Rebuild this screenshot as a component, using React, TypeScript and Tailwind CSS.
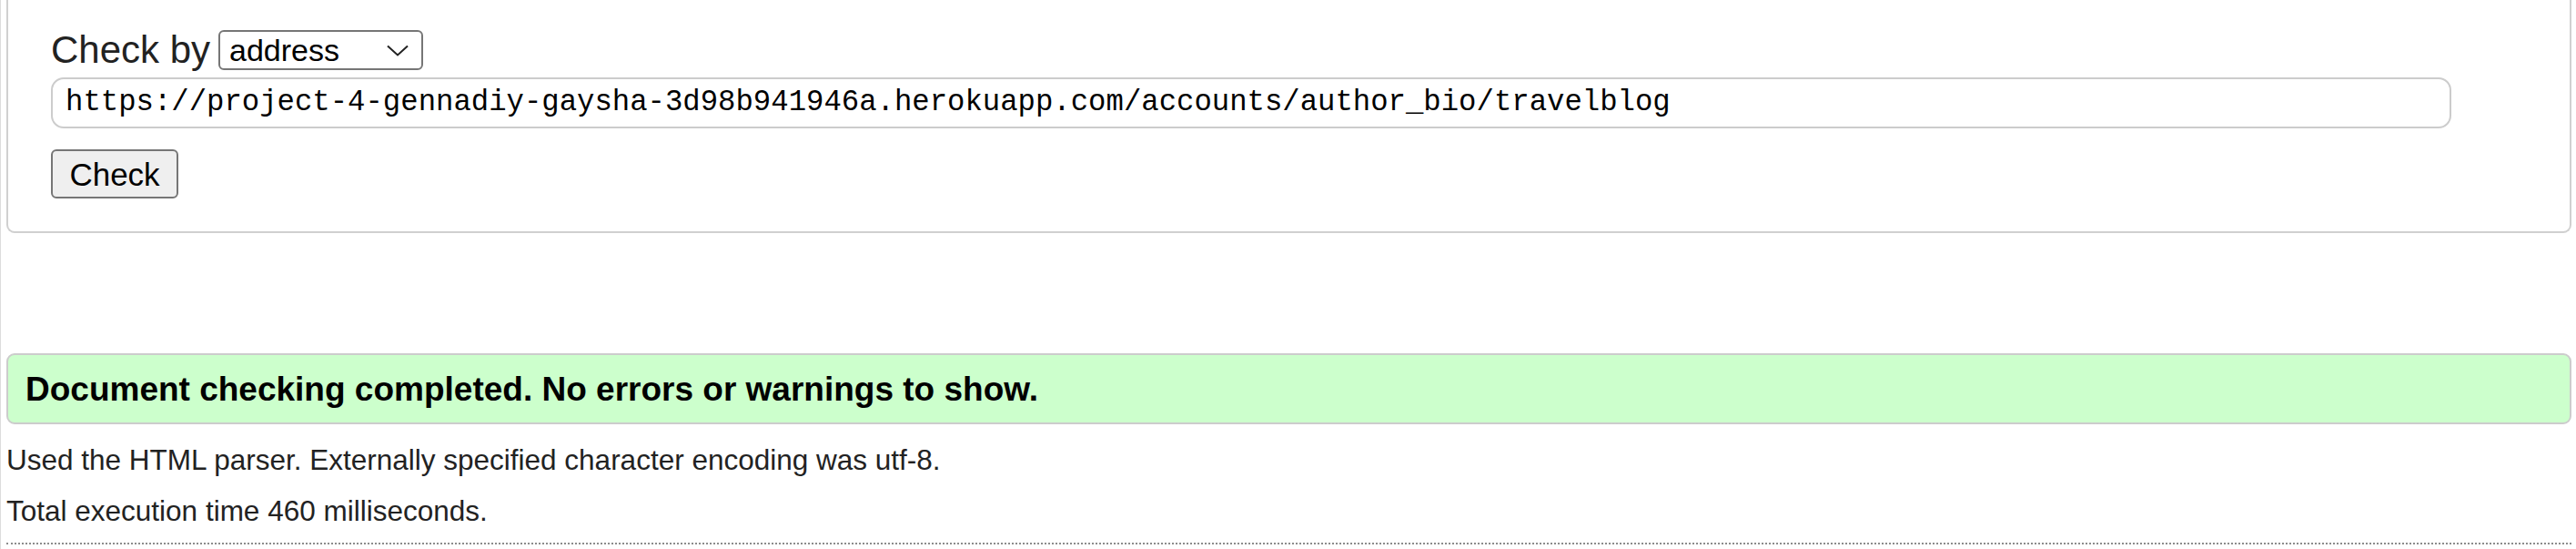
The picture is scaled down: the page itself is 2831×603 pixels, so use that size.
import React from "react";

const url =
  "https://project-4-gennadiy-gaysha-3d98b941946a.herokuapp.com/accounts/author_bio/travelblog";

export default function App() {
  return (
    <div className="min-h-screen bg-white border-l border-[#dcdcdc] pl-[6px] pr-[5px] font-['Liberation_Sans',Arial,sans-serif] text-[#222]">
      {/* form fieldset, top is scrolled out of view */}
      <div className="border-x-2 border-b-2 border-[#d0d0d0] rounded-b-[9px] pt-[33px] pb-[36px] pl-[47px]">
        <div className="flex items-center h-[44px]">
          <span className="text-[42px] leading-none w-[184px]">Check by</span>
          <div className="flex items-center justify-between w-[225px] h-[44px] border-2 border-[#767676] rounded-[6px] bg-white pl-[10px] pr-[14px]">
            <span className="text-[34px] leading-none text-black">address</span>
            <svg width="24" height="13" viewBox="0 0 24 13" fill="none">
              <path d="M1 1.5 L12 11.5 L23 1.5" stroke="#222" strokeWidth="2" />
            </svg>
          </div>
        </div>
        <div className="mt-[8px] w-[2638px] h-[56px] border-2 border-[#cccccc] rounded-[14px] flex items-center pl-[14px]">
          <span className="font-['Liberation_Mono','DejaVu_Sans_Mono',monospace] text-[32.3px] leading-none text-black whitespace-nowrap">
            {url}
          </span>
        </div>
        <button className="mt-[23px] w-[140px] h-[54px] bg-[#efefef] border-2 border-[#767676] rounded-[6px] text-[35px] leading-none text-black flex items-center justify-center">
          Check
        </button>
      </div>

      {/* result */}
      <div className="mt-[132px] h-[78px] bg-[#ccffcc] border-2 border-[#cccccc] rounded-[9px] flex items-center pl-[19px]">
        <h2 className="text-[37px] font-bold leading-none text-black">
          Document checking completed. No errors or warnings to show.
        </h2>
      </div>
      <p className="mt-[21px] text-[31.5px] leading-[37px]">
        Used the HTML parser. Externally specified character encoding was utf-8.
      </p>
      <p className="mt-[19px] text-[31.5px] leading-[37px]">
        Total execution time 460 milliseconds.
      </p>
      <div className="mt-[16px] border-t-2 border-dotted border-[#8c8c8c]" />
    </div>
  );
}
